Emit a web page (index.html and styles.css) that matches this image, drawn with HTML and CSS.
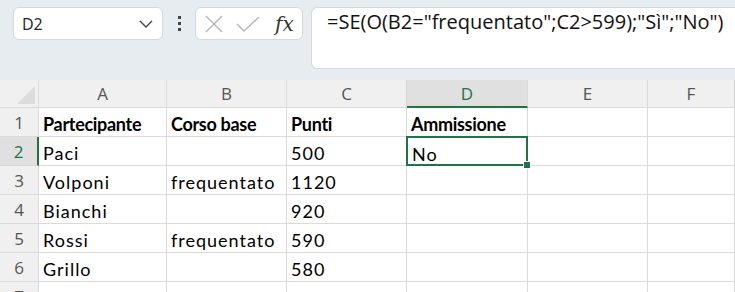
FILE: index.html
```html
<!DOCTYPE html>
<html lang="it">
<head>
    <meta charset="UTF-8">
    <title>Foglio</title>
    <link rel="stylesheet" href="styles.css">
</head>
<body>
    <div class="toolbar">
        <div class="name-box">
            <span>D2</span>
            <svg width="14" height="8" viewBox="0 0 14 8"><path d="M1 1l6 6 6-6" fill="none" stroke="#444" stroke-width="1.4"/></svg>
        </div>
        <div class="dots"><i></i><i></i><i></i></div>
        <div class="fx-box">
            <svg width="20" height="20" viewBox="0 0 20 20"><path d="M2 2l16 16M18 2L2 18" stroke="#b8b8b8" stroke-width="1.5"/></svg>
            <svg width="24" height="20" viewBox="0 0 24 20"><path d="M1 10l7 7L23 3" fill="none" stroke="#b8b8b8" stroke-width="1.5"/></svg>
            <span class="fx">fx</span>
        </div>
        <div class="formula">=SE(O(B2="frequentato";C2&gt;599);"Sì";"No")</div>
    </div>

    <div class="sheet">
        <div class="corner"></div>
        <div class="col-head">A</div>
        <div class="col-head">B</div>
        <div class="col-head">C</div>
        <div class="col-head active">D</div>
        <div class="col-head">E</div>
        <div class="col-head">F</div>

        <div class="row-head">1</div>
        <div class="cell bold">Partecipante</div>
        <div class="cell bold">Corso base</div>
        <div class="cell bold">Punti</div>
        <div class="cell bold">Ammissione</div>
        <div class="cell"></div>
        <div class="cell"></div>

        <div class="row-head active">2</div>
        <div class="cell">Paci</div>
        <div class="cell"></div>
        <div class="cell">500</div>
        <div class="cell selected">No<span class="handle"></span></div>
        <div class="cell"></div>
        <div class="cell"></div>

        <div class="row-head">3</div>
        <div class="cell">Volponi</div>
        <div class="cell">frequentato</div>
        <div class="cell">1120</div>
        <div class="cell"></div>
        <div class="cell"></div>
        <div class="cell"></div>

        <div class="row-head">4</div>
        <div class="cell">Bianchi</div>
        <div class="cell"></div>
        <div class="cell">920</div>
        <div class="cell"></div>
        <div class="cell"></div>
        <div class="cell"></div>

        <div class="row-head">5</div>
        <div class="cell">Rossi</div>
        <div class="cell">frequentato</div>
        <div class="cell">590</div>
        <div class="cell"></div>
        <div class="cell"></div>
        <div class="cell"></div>

        <div class="row-head">6</div>
        <div class="cell">Grillo</div>
        <div class="cell"></div>
        <div class="cell">580</div>
        <div class="cell"></div>
        <div class="cell"></div>
        <div class="cell"></div>

        <div class="row-head">7</div>
        <div class="cell"></div>
        <div class="cell"></div>
        <div class="cell"></div>
        <div class="cell"></div>
        <div class="cell"></div>
        <div class="cell"></div>
    </div>
</body>
</html>
```

FILE: styles.css
```css
body {
    margin: 0;
    background-color: #e6ecef;
    font-family: "Open Sans", "Noto Sans", sans-serif;
    overflow: hidden;
}
.toolbar {
    height: 80px;
    display: flex;
    align-items: flex-start;
    padding: 7px 0 0 13px;
    box-sizing: border-box;
}
.name-box {
    width: 150px;
    height: 33px;
    box-sizing: border-box;
    background: white;
    border: 1px solid #d4d9dc;
    border-radius: 6px;
    display: flex;
    align-items: center;
    justify-content: space-between;
    padding: 0 9px 0 8px;
    font-size: 16px;
    color: #222;
}
.dots {
    width: 32px;
    height: 33px;
    display: flex;
    flex-direction: column;
    align-items: center;
    justify-content: center;
    gap: 3px;
}
.dots i {
    width: 3px;
    height: 3px;
    background: #444;
}
.fx-box {
    width: 108px;
    height: 33px;
    box-sizing: border-box;
    background: white;
    border: 1px solid #d4d9dc;
    border-radius: 6px;
    display: flex;
    align-items: center;
    padding: 0 6px 0 8px;
    gap: 12px;
}
.fx {
    font-family: "DejaVu Serif", "Liberation Serif", serif;
    font-style: italic;
    font-size: 20px;
    color: #333;
    margin-left: 3px;
}
.formula {
    margin-left: 8px;
    flex: 1;
    height: 62px;
    background: white;
    border: 1px solid #d4d9dc;
    border-right: none;
    border-radius: 6px 0 0 6px;
    padding: 0 0 0 15px;
    box-sizing: border-box;
    font-size: 20px;
    color: #111;
    white-space: nowrap;
}
.sheet {
    display: grid;
    grid-template-columns: 39px 128px 120px 120px 121px 120px 1fr;
    grid-template-rows: 28px repeat(7, 29px);
    background: white;
}
.corner, .col-head, .row-head {
    background: #f0f0f0;
    color: #555;
    font-size: 17px;
    box-sizing: border-box;
    border-right: 1px solid #dadada;
    border-bottom: 1px solid #dadada;
}
.corner {
    position: relative;
}
.corner::after {
    content: "";
    position: absolute;
    right: 3px;
    bottom: 3px;
    border-left: 18px solid transparent;
    border-bottom: 18px solid #dcdcdc;
}
.col-head {
    display: flex;
    align-items: center;
    justify-content: center;
}
.col-head.active {
    background: #e0e0e0;
    color: #217346;
    border-bottom: 2px solid #217346;
}
.row-head {
    display: flex;
    align-items: center;
    justify-content: center;
}
.row-head.active {
    background: #e0e0e0;
    color: #217346;
    border-right: 2px solid #217346;
}
.cell {
    box-sizing: border-box;
    border-right: 1px solid #dadada;
    border-bottom: 1px solid #dadada;
    font-family: "Lato", "Liberation Sans", sans-serif;
    font-size: 18px;
    letter-spacing: 1px;
    color: #000;
    padding: 5px 0 0 4px;
    white-space: nowrap;
}
.bold {
    font-weight: bold;
    letter-spacing: -0.3px;
}
.selected {
    position: relative;
    border: 2px solid #217346;
    margin: -1px 0 0 -1px;
    padding: 5px 0 0 4px;
}
.handle {
    position: absolute;
    right: -5px;
    bottom: -5px;
    width: 6px;
    height: 6px;
    background: #217346;
    border: 1px solid white;
}
```
